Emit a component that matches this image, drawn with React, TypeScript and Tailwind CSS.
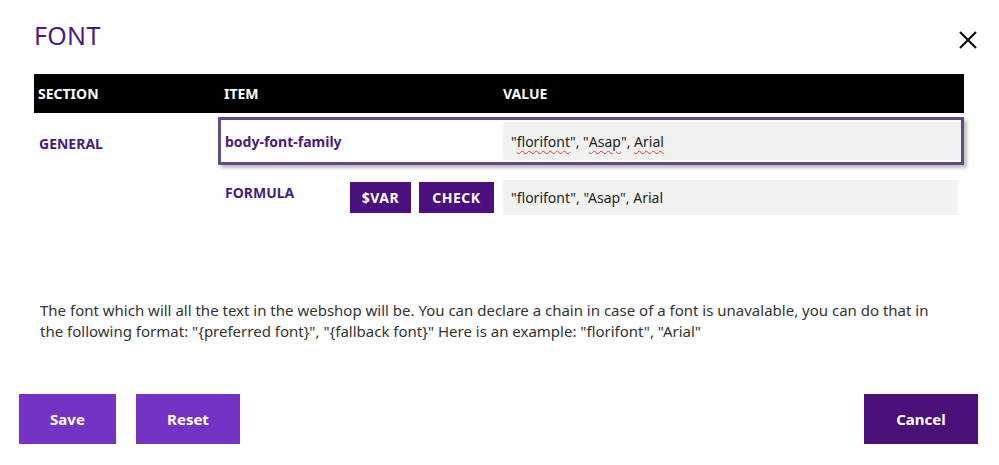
import React from "react";

const desc =
  'The font which will all the text in the webshop will be. You can declare a chain in case of a font is unavalable, you can do that in the following format: "{preferred font}", "{fallback font}" Here is an example: "florifont", "Arial"';

export default function App() {
  const font = { fontFamily: '"Noto Sans", "Open Sans", sans-serif' };
  const sq = "underline decoration-wavy decoration-red-500 decoration-[1px] underline-offset-[3px]";
  return (
    <div className="w-[999px] h-[465px] bg-white relative" style={font}>
      <div className="flex items-start justify-between pl-[34px] pr-[20px] pt-[18px]">
        <h1 className="text-[25px] leading-[34px] text-[#4b1a80] font-normal tracking-[0.3px]">FONT</h1>
        <svg width="20" height="20" viewBox="0 0 20 20" className="mt-[12px] mr-[1px]">
          <path d="M2 2 L18 18 M18 2 L2 18" stroke="#111" strokeWidth="2.2" />
        </svg>
      </div>
      <div className="ml-[34px] mt-[22px] w-[930px] h-[39px] bg-black flex items-center text-white font-bold text-[14px]">
        <div className="w-[190px] pl-[4px]">SECTION</div>
        <div className="w-[279px]">ITEM</div>
        <div>VALUE</div>
      </div>
      <div className="flex mt-[4px] ml-[34px]">
        <div className="w-[184px] pl-[5px] pt-[16px] text-[14px] font-bold text-[#4b1a80]">GENERAL</div>
        <div className="w-[746px] h-[48px] border-[3px] border-[#634c86] shadow-[3px_3px_3px_rgba(0,0,0,0.25)] flex items-center">
          <div className="w-[282px] pl-[4px] text-[14px] font-bold text-[#4b1a80]">body-font-family</div>
          <div className="flex-1 h-[38px] bg-[#f1f2f0] flex items-center pl-[8px] text-[14px] text-[#222] whitespace-pre">
            <span>"</span>
            <span className={sq}>florifont</span>
            <span>", "</span>
            <span className={sq}>Asap</span>
            <span>", </span>
            <span className={sq}>Arial</span>
          </div>
        </div>
      </div>
      <div className="flex mt-[15px] ml-[225px] items-start">
        <div className="w-[125px] pt-[2px] text-[14px] font-bold text-[#4b1a80]">FORMULA</div>
        <div className="flex gap-[8px] mt-[2px]">
          <div className="w-[61px] h-[31px] bg-[#4b0f80] text-white font-bold text-[14px] tracking-[0.5px] flex items-center justify-center">$VAR</div>
          <div className="w-[75px] h-[31px] bg-[#4b0f80] text-white font-bold text-[14px] tracking-[0.5px] flex items-center justify-center">CHECK</div>
        </div>
        <div className="ml-[9px] w-[455px] h-[35px] bg-[#f2f3f1] flex items-center pl-[8px] text-[14px] text-[#222]">"florifont", "Asap", Arial</div>
      </div>
      <p className="ml-[40px] w-[900px] mt-[85px] text-[15px] leading-[21px] text-[#333]">{desc}</p>
      <div className="flex ml-[19px] mr-[21px] mt-[52px]">
        <button className="w-[97px] h-[50px] bg-[#7433c4] text-white font-bold text-[15px]">Save</button>
        <button className="ml-[20px] w-[104px] h-[50px] bg-[#7433c4] text-white font-bold text-[15px]">Reset</button>
        <div className="flex-1" />
        <button className="w-[114px] h-[50px] bg-[#4a0f78] text-white font-bold text-[15px]">Cancel</button>
      </div>
    </div>
  );
}
